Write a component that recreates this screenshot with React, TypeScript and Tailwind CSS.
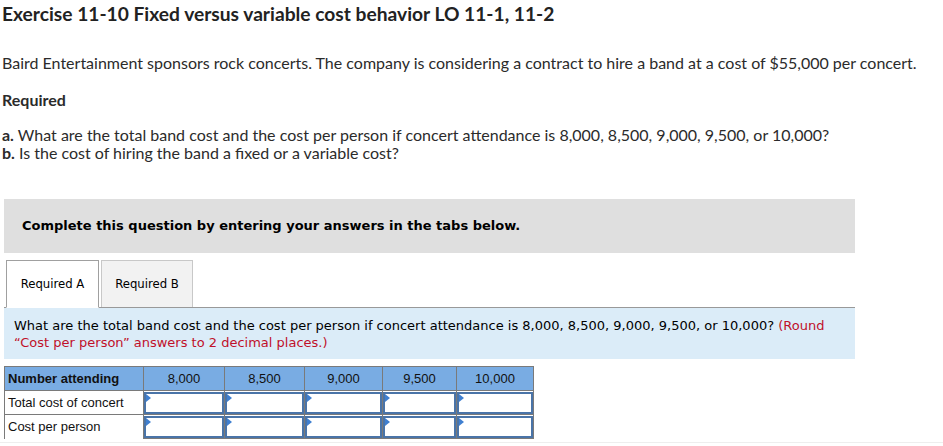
import React from 'react'

const cols = ['8,000', '8,500', '9,000', '9,500', '10,000']
const widths = ['w-[81px]', 'w-[80px]', 'w-[78px]', 'w-[74px]', 'w-[77px]']

function InputCell({ w }: { w: string }) {
  return (
    <td className={`${w} h-[24px] p-0 border border-[#7a7a7a]`}>
      <div className="relative h-[22px] border-2 border-[#4a74a8] bg-white">
        <span className="absolute left-0 top-0 w-0 h-0 border-t-[4px] border-b-[4px] border-l-[5px] border-t-transparent border-b-transparent border-l-[#3f7fd0]" />
      </div>
    </td>
  )
}

export default function App() {
  return (
    <div className="w-[943px] h-[446px] bg-white text-[#222] overflow-hidden">
      <h1 className="pl-[2px] pt-[3px] text-[19.2px] font-bold leading-[22px] text-[#222]" style={{ fontFamily: 'Lato, sans-serif' }}>
        Exercise 11-10 Fixed versus variable cost behavior LO 11-1, 11-2
      </h1>

      <div className="pl-[2px] text-[16px] text-[#2b2b2b]" style={{ fontFamily: 'Lato, sans-serif' }}>
        <p className="mt-[27px] leading-[22px]">
          Baird Entertainment sponsors rock concerts. The company is considering a contract to hire a band at a cost of $55,000 per concert.
        </p>
        <p className="mt-[15px] leading-[22px] font-bold">Required</p>
        <p className="mt-[14px] leading-[18px] pt-[1px]">
          <span className="font-bold">a.</span> What are the total band cost and the cost per person if concert attendance is 8,000, 8,500, 9,000, 9,500, or 10,000?
        </p>
        <p className="leading-[18px]">
          <span className="font-bold">b.</span> Is the cost of hiring the band a fixed or a variable cost?
        </p>
      </div>

      <div className="ml-[4px] mt-[37px] w-[851px] h-[54px] bg-[#dfdfdf] flex items-center pl-[18px]" style={{ fontFamily: '"DejaVu Sans", sans-serif' }}>
        <span className="text-[13px] font-bold text-black">Complete this question by entering your answers in the tabs below.</span>
      </div>

      <div className="ml-[4px] w-[851px] mt-[7px]">
        <div className="flex items-end h-[48px] border-b border-[#999] pl-[2px] gap-[2px]" style={{ fontFamily: '"DejaVu Sans Condensed", "DejaVu Sans", sans-serif' }}>
          <div className="w-[93px] h-[48px] -mb-px bg-white border border-[#a0a0a0] border-b-white flex items-center justify-center text-[13px] text-black">
            Required A
          </div>
          <div className="w-[92px] h-[47px] bg-[#f2f2f2] border border-[#c8c8c8] border-b-0 flex items-center justify-center text-[13px] text-black">
            Required B
          </div>
        </div>
        <div className="h-[51px] bg-[#dbecf8] pl-[10px] pr-[10px] pt-[9px] text-[13px] leading-[17px] text-black" style={{ fontFamily: '"DejaVu Sans", sans-serif' }}>
          What are the total band cost and the cost per person if concert attendance is 8,000, 8,500, 9,000, 9,500, or 10,000?{' '}
          <span className="text-[#c0102a]">(Round “Cost per person” answers to 2 decimal places.)</span>
        </div>
      </div>

      <table className="ml-[4px] mt-[7px] border-collapse text-[13px]" style={{ fontFamily: '"Liberation Sans", Arial, sans-serif' }}>
        <thead>
          <tr className="h-[24px] bg-[#79ace3]">
            <th className="w-[139px] border border-[#7a7a7a] text-left font-bold pl-[3px] text-[#111]">Number attending</th>
            {cols.map((c, i) => (
              <th key={c} className={`${widths[i]} border border-[#7a7a7a] text-center font-normal text-[#111]`}>{c}</th>
            ))}
          </tr>
        </thead>
        <tbody>
          <tr>
            <td className="h-[24px] border border-[#7a7a7a] pl-[3px] text-[#111]">Total cost of concert</td>
            {widths.map((w, i) => <InputCell key={i} w={w} />)}
          </tr>
          <tr>
            <td className="h-[24px] border-l border-r border-[#7a7a7a] pl-[3px] text-[#111]">Cost per person</td>
            {widths.map((w, i) => <InputCell key={i} w={w} />)}
          </tr>
        </tbody>
      </table>
      <div className="mt-[3px] h-px w-[943px] bg-[#eeeeee]" />
    </div>
  )
}
